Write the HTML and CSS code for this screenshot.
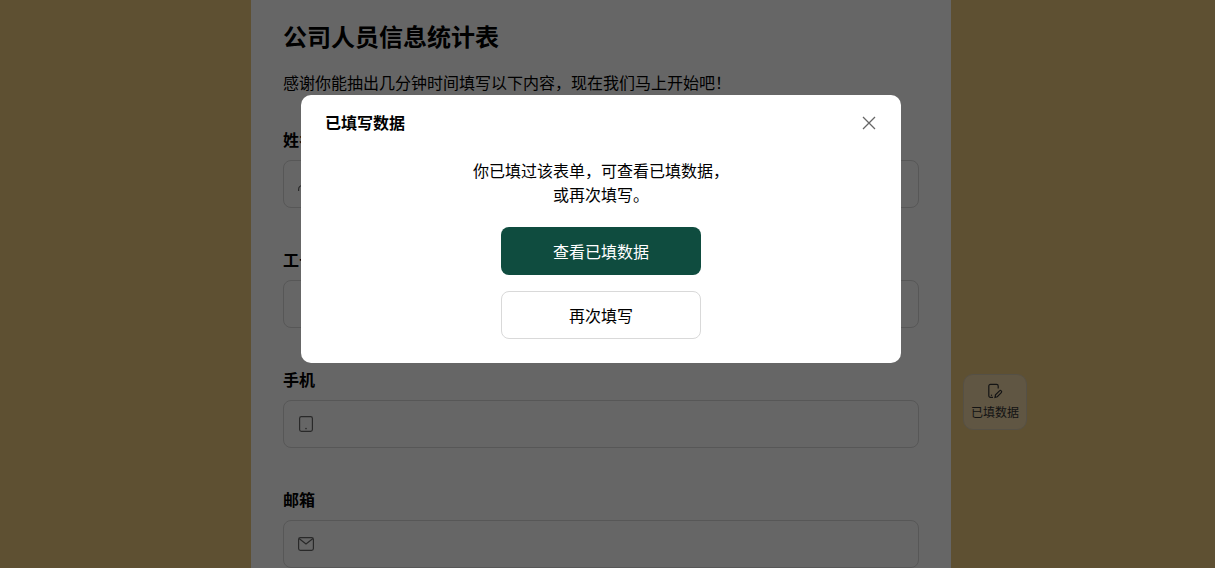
FILE: index.html
```html
<!DOCTYPE html>
<html>
<head>
  <meta charset="utf-8">
  <link rel="stylesheet" href="styles.css">
</head>
<body>
  <div class="page">
    <div class="form-panel">
      <h1 class="form-title">公司人员信息统计表</h1>
      <p class="form-desc">感谢你能抽出几分钟时间填写以下内容，现在我们马上开始吧！</p>

      <div class="field">
        <div class="field-label">姓名</div>
        <div class="field-input">
          <svg class="field-icon" viewBox="0 0 18 18" fill="none" stroke="currentColor" stroke-width="1.2">
            <circle cx="9" cy="5.500" r="3.600"/>
            <path d="M1.600 16v-1.500c0-2.500 2-4 4.400-4h6c2.400 0 4.400 1.500 4.400 4V16"/>
          </svg>
        </div>
      </div>

      <div class="field">
        <div class="field-label">工号</div>
        <div class="field-input"></div>
      </div>

      <div class="field">
        <div class="field-label">手机</div>
        <div class="field-input">
          <svg class="field-icon" viewBox="0 0 18 18" fill="none" stroke="currentColor" stroke-width="1.2">
            <rect x="2.600" y="1.600" width="12.800" height="14.800" rx="1.800"/>
            <circle cx="9" cy="13.600" r=".8" fill="currentColor" stroke="none"/>
          </svg>
        </div>
      </div>

      <div class="field">
        <div class="field-label">邮箱</div>
        <div class="field-input">
          <svg class="field-icon" viewBox="0 0 18 18" fill="none" stroke="currentColor" stroke-width="1.2">
            <rect x="1.600" y="2.600" width="14.800" height="12.800" rx="1.800"/>
            <path d="M2 3.500l7 5.500 7-5.500"/>
          </svg>
        </div>
      </div>
    </div>

    <div class="side-btn">
      <svg class="side-icon" viewBox="0 0 16 16" fill="none" stroke="currentColor" stroke-width="1.2">
        <path d="M6 14.400H3.400a1.600 1.600 0 0 1-1.600-1.600V3a1.600 1.600 0 0 1 1.600-1.600h6.200a1.600 1.600 0 0 1 1.600 1.600v2.600"/>
        <path d="M8 14.400l.5-2.500 4-4a1.200 1.200 0 0 1 1.800 1.700l-4 4.100z"/>
        <circle cx="4.500" cy="12.200" r=".7" fill="currentColor" stroke="none"/>
      </svg>
      <span>已填数据</span>
    </div>
  </div>

  <div class="overlay">
    <div class="modal">
      <div class="modal-header">
        <span class="modal-title">已填写数据</span>
        <svg class="modal-close" viewBox="0 0 14 14" fill="none" stroke="currentColor" stroke-width="1.3">
          <path d="M1 1l12 12M13 1L1 13"/>
        </svg>
      </div>
      <div class="modal-body">
        <p class="modal-text">你已填过该表单，可查看已填数据，<br>或再次填写。</p>
        <button class="btn btn-primary">查看已填数据</button>
        <button class="btn btn-default">再次填写</button>
      </div>
    </div>
  </div>
</body>
</html>
```

FILE: styles.css
```css
* {
  box-sizing: border-box;
}

html, body {
  height: 100%;
}

body {
  margin: 0;
  overflow: hidden;
  font-family: "Liberation Sans", "Noto Sans CJK SC", sans-serif;
  font-size: 16px;
  color: #000;
  background: #ebc87d;
}

.page {
  position: relative;
  height: 100%;
  display: flex;
  justify-content: center;
  padding-right: 13px;
}

.form-panel {
  width: 700px;
  height: 100%;
  padding: 21px 32px 0;
  background: #fff;
  overflow: hidden;
}

.form-title {
  margin: 0;
  font-size: 24px;
  line-height: 34px;
  font-weight: 700;
}

.form-desc {
  margin: 17px 0 0;
  line-height: 24px;
}

.field {
  height: 120px;
}

.form-desc + .field {
  margin-top: 33px;
}

.field-label {
  font-weight: 700;
  line-height: 24px;
  margin-bottom: 7px;
}

.field-input {
  display: flex;
  align-items: center;
  height: 48px;
  padding-left: 13px;
  border: 1px solid #d9d9d9;
  border-radius: 8px;
  color: #666;
}

.field-icon {
  width: 18px;
  height: 18px;
}

.side-btn {
  position: absolute;
  left: 963px;
  top: 374px;
  width: 64px;
  height: 56px;
  display: flex;
  flex-direction: column;
  align-items: center;
  padding-top: 8px;
  border: 1px solid #d5c7ac;
  border-radius: 10px;
  background: #f0d6a8;
  color: #333;
  font-size: 12px;
  line-height: 18px;
}

.side-icon {
  width: 16px;
  height: 16px;
  margin-bottom: 5px;
}

.overlay {
  position: fixed;
  top: 0;
  right: 0;
  bottom: 0;
  left: 0;
  display: flex;
  justify-content: center;
  align-items: flex-start;
  padding: 95px 13px 0 0;
  background: rgba(0, 0, 0, 0.6);
}

.modal {
  width: 600px;
  height: 268px;
  background: #fff;
  border-radius: 10px;
}

.modal-header {
  display: flex;
  justify-content: space-between;
  align-items: center;
  height: 55px;
  padding: 0 25px 0 24px;
}

.modal-title {
  font-weight: 700;
  padding-bottom: 2px;
}

.modal-close {
  width: 14px;
  height: 14px;
  color: #666;
}

.modal-body {
  display: flex;
  flex-direction: column;
  align-items: center;
}

.modal-text {
  margin: 10px 0 19px;
  line-height: 24px;
  text-align: center;
}

.btn {
  width: 200px;
  height: 48px;
  font: inherit;
  border-radius: 8px;
}

.btn-primary {
  border: none;
  background: #0f4c3f;
  color: #fff;
  margin-bottom: 16px;
}

.btn-default {
  border: 1px solid #d9d9d9;
  background: #fff;
  color: #000;
}
```
